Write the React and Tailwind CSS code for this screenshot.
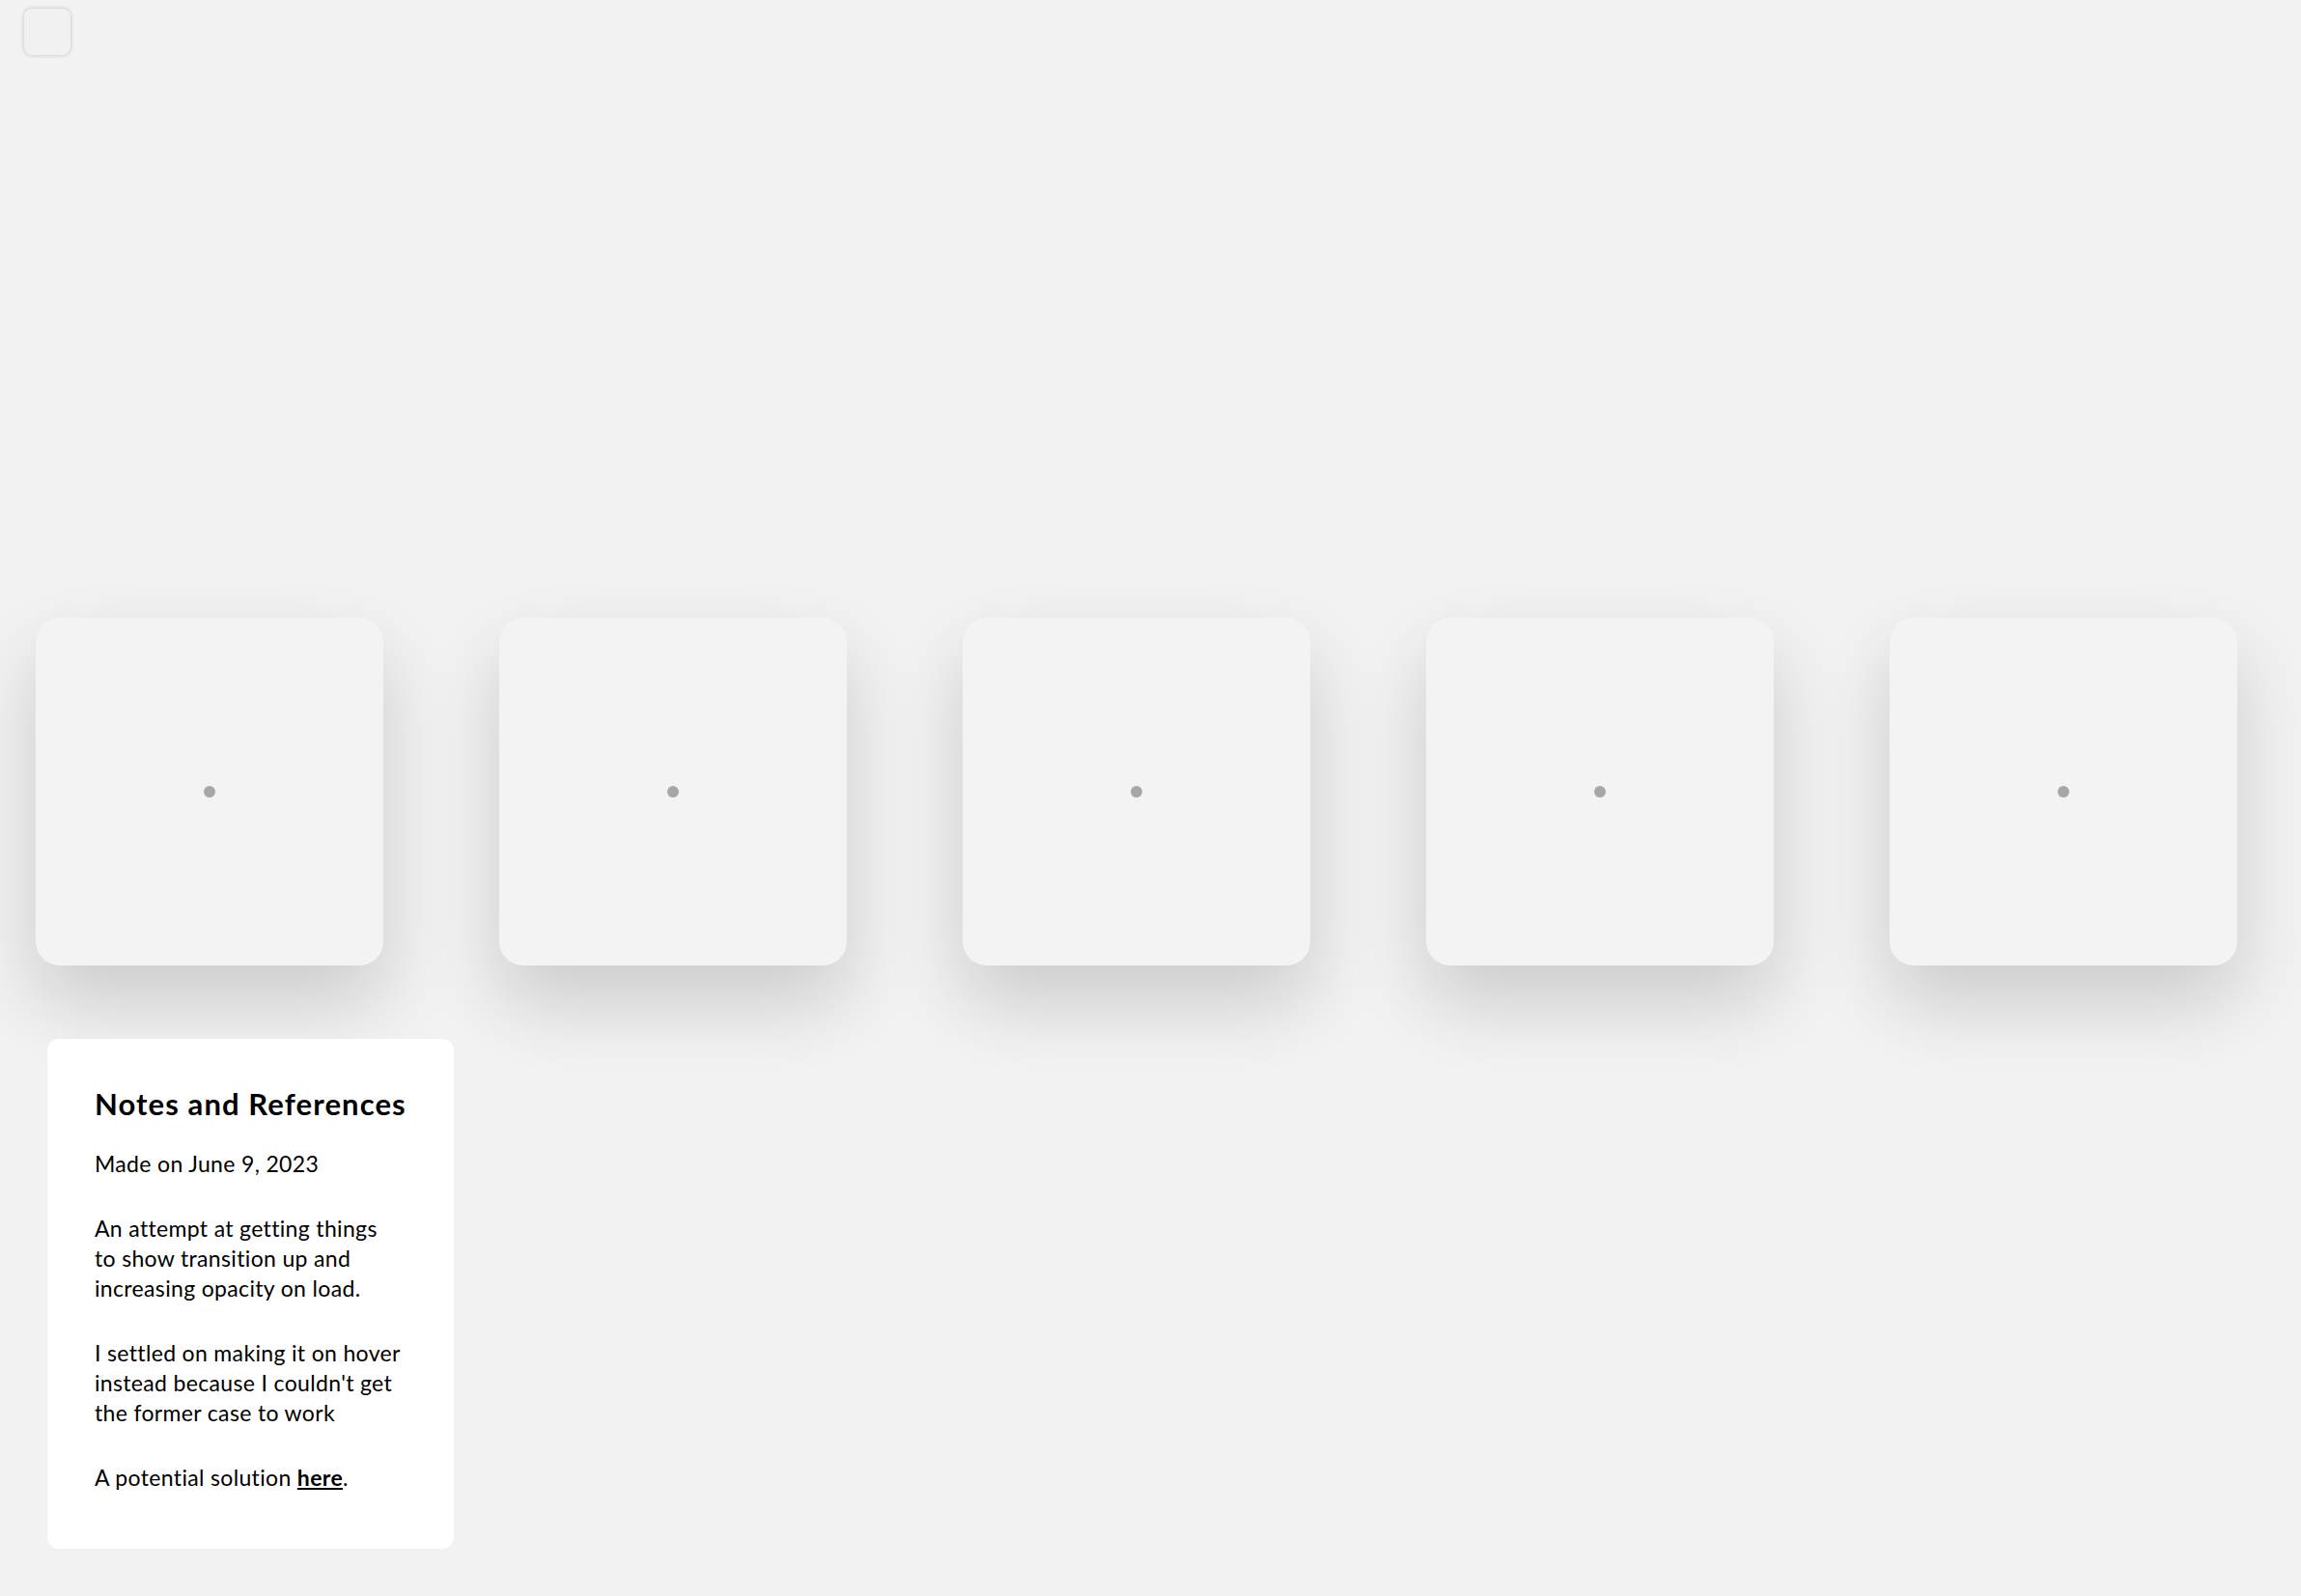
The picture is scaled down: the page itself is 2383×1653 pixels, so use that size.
import React from 'react';

const cards = [1, 2, 3, 4, 5];

export default function App() {
  return (
    <div className="relative min-h-screen bg-[#f2f2f2] font-['Lato','Noto_Sans',sans-serif] text-black">
      {/* menu toggle */}
      <button className="absolute left-[25px] top-[9px] h-12 w-12 rounded-lg bg-[#f1f1f1] shadow-[0_0_4px_rgba(0,0,0,0.22)]" />

      {/* cards row */}
      <div className="flex h-screen items-center gap-[120px] pb-[14px] pl-[37px]">
        {cards.map((n) => (
          <div
            key={n}
            className="flex h-[360px] w-[360px] shrink-0 items-center justify-center rounded-[25px] bg-[#f3f3f3] shadow-[0_38px_80px_rgba(0,0,0,0.16)]"
          >
            <span className="h-3 w-3 rounded-full bg-[#a6a6a6]" />
          </div>
        ))}
      </div>

      {/* notes */}
      <div className="fixed bottom-[49px] left-[49px] w-[421px] rounded-xl bg-white px-[49px] pt-[49px] pb-[58px]">
        <h2 className="mb-[29px] text-[31px] font-bold leading-[36px] tracking-[1.1px]">Notes and References</h2>
        <div className="text-[23px] leading-[31px] tracking-[0.34px]">
          <p className="mb-[36px]">Made on June 9, 2023</p>
          <p className="mb-[36px]">
            An attempt at getting things<br />
            to show transition up and increasing opacity on load.
          </p>
          <p className="mb-[36px]">
            I settled on making it on hover instead because I couldn't get the former case to work
          </p>
          <p>
            A potential solution <a href="#" className="font-bold underline">here</a>.
          </p>
        </div>
      </div>
    </div>
  );
}
